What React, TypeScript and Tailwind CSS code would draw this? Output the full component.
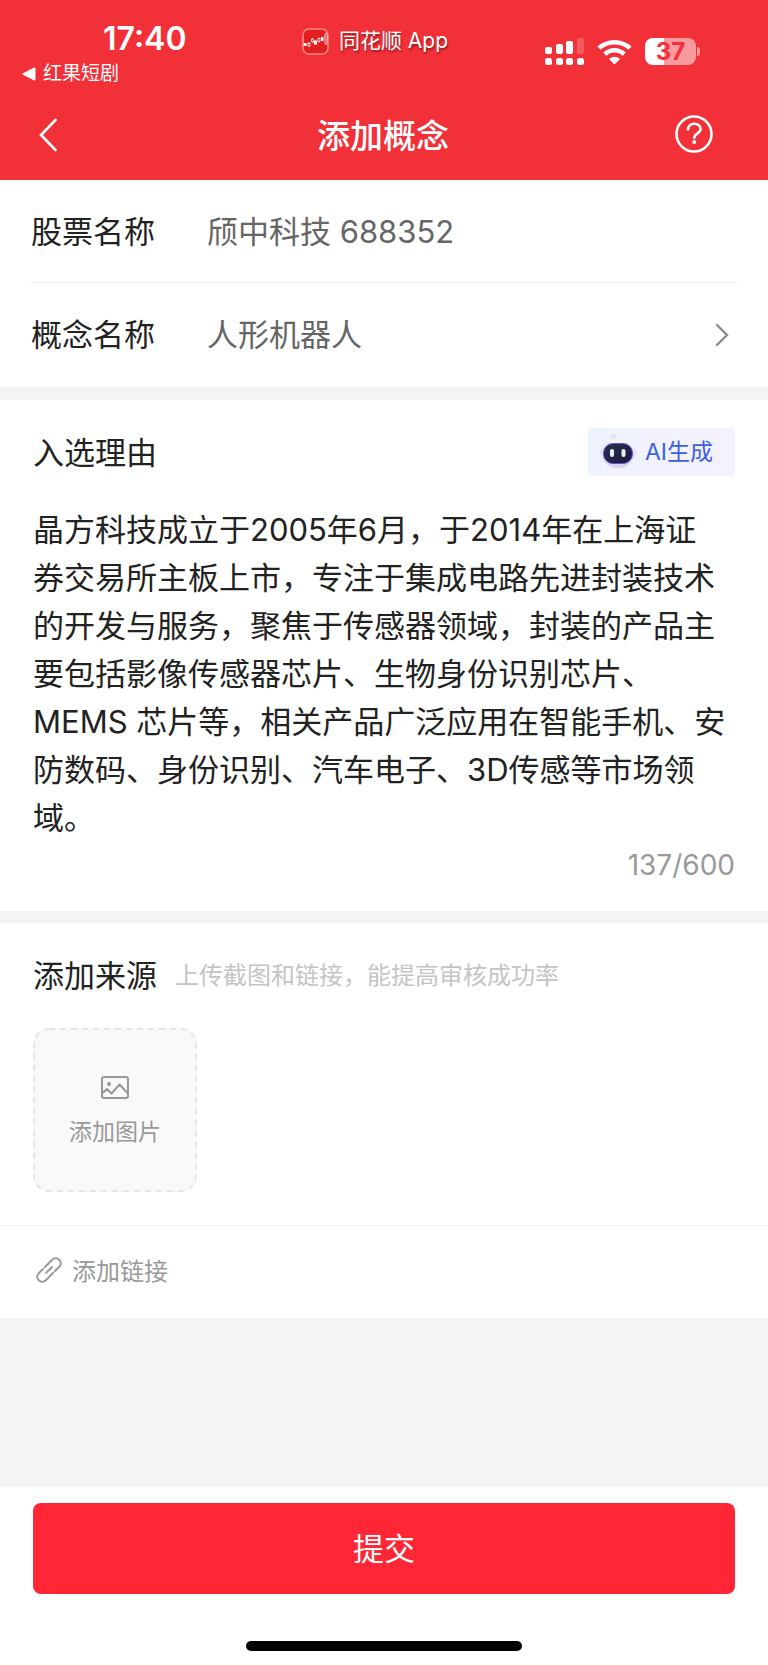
import { useState } from "react"

const MAX_LENGTH = 600

const DEFAULT_REASON =
    "晶方科技成立于2005年6月，于2014年在上海证券交易所主板上市，专注于集成电路先进封装技术的开发与服务，聚焦于传感器领域，封装的产品主要包括影像传感器芯片、生物身份识别芯片、MEMS 芯片等，相关产品广泛应用在智能手机、安防数码、身份识别、汽车电子、3D传感等市场领域。"

export default function App() {
    const [reason, setReason] = useState(DEFAULT_REASON)

    return (
        <div className="flex min-h-screen flex-col bg-[#f4f4f4] font-['Inter','Noto_Sans_CJK_SC',sans-serif] text-[#222222]">
            <header className="bg-[#f23038] text-white">
                <StatusBar />
                <NavBar />
            </header>

            <main>
                <section className="bg-white px-[31px] text-[31px] leading-[40px]">
                    <div className="flex h-[103px] items-center border-b border-[#eeeeee] pt-[2px]">
                        <label htmlFor="stock" className="w-[176px] shrink-0">股票名称</label>
                        <input id="stock" readOnly defaultValue="颀中科技 688352" className="h-[40px] min-w-0 flex-1 text-[#666666] outline-none" />
                    </div>
                    <button type="button" className="flex h-[104px] w-full items-center pr-2 text-left">
                        <span className="w-[176px] shrink-0">概念名称</span>
                        <span className="flex-1 text-[#666666]">人形机器人</span>
                        <svg width="14" height="24" viewBox="0 0 14 24" fill="none" stroke="#8c8c8c" strokeWidth="2.4" strokeLinecap="round">
                            <path d="M2 2l10 10L2 22" />
                        </svg>
                    </button>
                </section>

                <section className="mt-[13px] bg-white px-[33px] pt-7 pb-[26px]">
                    <div className="flex h-12 items-center justify-between">
                        <label htmlFor="reason" className="pt-[2px] text-[31px] leading-[40px]">入选理由</label>
                        <button type="button" className="flex h-12 items-center gap-[7px] rounded bg-linear-to-r from-[#eef3ff] to-[#f5f0fd] pr-[22px] pl-[10px] text-[23px] text-[#3b5fdc]">
                            <RobotIcon />
                            AI生成
                        </button>
                    </div>
                    <textarea
                        id="reason"
                        rows={7}
                        maxLength={MAX_LENGTH}
                        value={reason}
                        onChange={(e) => { setReason(e.target.value) }}
                        className="mt-[30px] block w-full resize-none overflow-hidden pr-2 text-[31px] leading-[48px] outline-none"
                    />
                    <p className="mt-[3px] text-right text-[28px] leading-[40px] text-[#999999]">{reason.length}/{MAX_LENGTH}</p>
                </section>

                <section className="mt-3 bg-white">
                    <div className="px-[33px] pt-[33px] pb-[33px]">
                        <div className="flex items-center gap-[18px]">
                            <h2 className="text-[31px] leading-[40px]">添加来源</h2>
                            <p className="text-[24px] leading-[40px] text-[#c4c4c4]">上传截图和链接，能提高审核成功率</p>
                        </div>
                        <button type="button" className="relative mt-8 flex size-[164px] flex-col items-center justify-center gap-[14px] rounded-2xl bg-[#f9f9f9] pt-[6px] text-[23px] leading-[36px] text-[#999999]">
                            <svg className="absolute inset-0" width="164" height="164" fill="none" stroke="#e6e6e6" strokeWidth="2">
                                <rect x="1" y="1" width="162" height="162" rx="15" strokeDasharray="6 5" />
                            </svg>
                            <svg width="28" height="24" viewBox="0 0 28 24" fill="none" stroke="#999999" strokeWidth="2" strokeLinejoin="round">
                                <rect x="1" y="1" width="26" height="21" rx="2" />
                                <circle cx="8" cy="8" r="2" fill="#999999" stroke="none" />
                                <path d="M1.500 17l4.500-4 4.500 4.500 8-9 8 8.500" />
                            </svg>
                            添加图片
                        </button>
                    </div>
                    <button type="button" className="flex h-[93px] w-full items-center gap-[10px] border-t border-[#eeeeee] px-9 text-[24px] leading-[36px] text-[#999999]">
                        <svg className="mb-1" width="26" height="26" viewBox="-13 -13 26 26" fill="none" stroke="#999999" strokeWidth="2" strokeLinecap="round">
                            <g transform="rotate(-45)">
                                <path d="M-3.500 -5H-9.500A5 5 0 0 0 -9.500 5H1" />
                                <path d="M3.500 5H9.500A5 5 0 0 0 9.500 -5H-1" />
                                <path d="M-4 0H4" />
                            </g>
                        </svg>
                        添加链接
                    </button>
                </section>
            </main>

            <footer className="mt-auto flex flex-col items-center bg-white px-[33px] pt-4 pb-[14px]">
                <button type="button" className="h-[91px] w-full rounded-lg bg-[#ff2636] text-[31px] leading-[40px] text-white">提交</button>
                <div className="mt-[47px] h-[10px] w-[276px] rounded-full bg-black" />
            </footer>
        </div>
    )
}

const StatusBar = () => (
    <div className="flex h-[90px] items-start pr-[18px]">
        <div className="flex-1 pt-[21px] pr-7 pl-[22px]">
            <p className="pl-[81px] text-[32px] leading-[36px] font-semibold">17:40</p>
            <a href="#" className="mt-1 flex items-center gap-[7px] text-[19px] leading-[26px]">
                <svg width="14" height="14" viewBox="0 0 14 14" fill="currentColor">
                    <path d="M1 6.200L12 .6q1.500-.6 1.500 1v10.800q0 1.600-1.500 1L1 7.800q-1.200-.8 0-1.600z" />
                </svg>
                红果短剧
            </a>
        </div>
        <div className="flex items-center gap-[10px] pt-[27px] text-[21px] leading-[28px] text-shadow-[1px_2px_2px_rgb(0_0_0/0.4)]">
            <svg width="27" height="27" viewBox="0 0 27 27" fill="none">
                <rect x="1" y="1" width="25" height="25" rx="6" fill="#e51f20" stroke="#f88" strokeWidth="1.500" />
                <path d="M3 16.500h2M7 14v5M10.500 10v5M17 9.500v5" stroke="#fff" strokeWidth=".8" />
                <path d="M1.500 15h3v3h-3zM12 12.500h3v4h-3zM19 9h2.500v4H19z" fill="#fff" />
                <path d="M6 15.200h2v3H6zM9.500 11h2v3h-2zM16 10.500h2v3h-2zM23 6.500q0-1.500 1-1.500t1 1.500v9q0 .8-1 .8t-1-.8z" fill="#e51f20" stroke="#fff" strokeWidth=".8" />
            </svg>
            <span>同花顺 App</span>
        </div>
        <div className="flex flex-1 items-center justify-end gap-[13px] pt-[38px] pr-[50px]">
            <svg width="39" height="27" viewBox="0 0 39 27" fill="#fff">
                <rect x="0" y="9" width="7" height="7" rx="2" />
                <rect x="11" y="6" width="7" height="10" rx="2" />
                <rect x="21" y="3" width="7" height="13" rx="2" />
                <rect x="32" y="0" width="7" height="16" rx="2" opacity=".2" />
                <rect x="0" y="20" width="7" height="7" rx="2.500" />
                <rect x="11" y="20" width="7" height="7" rx="2.500" />
                <rect x="21" y="20" width="7" height="7" rx="2.500" />
                <rect x="32" y="20" width="7" height="7" rx="2.500" />
            </svg>
            <svg width="35" height="26" viewBox="0 0 35 26" fill="none" stroke="#fff" strokeWidth="4.600">
                <path d="M2 9.200C10.500 1.200 24.500 1.200 33 9.200" />
                <path d="M7.800 15.200C13.500 10 21.500 10 27.200 15.200" />
                <path d="M17.500 25.500l-5.500-5.500q5.500-4.600 11 0z" fill="#fff" stroke="none" />
            </svg>
            <div className="flex items-center gap-px">
                <span className="flex h-[27px] w-[51px] items-center justify-center rounded-lg bg-linear-to-r from-white from-37% to-[#f99a9e] to-37% text-[24px] leading-[27px] font-bold text-[#f23038]">37</span>
                <span className="h-[9px] w-[3px] rounded-r-full bg-[#f99a9e]" />
            </div>
        </div>
    </div>
)

const NavBar = () => (
    <nav className="grid h-[90px] grid-cols-[1fr_auto_1fr] items-center pr-[55px] pl-[39px]">
        <button type="button" aria-label="返回" className="w-fit">
            <svg width="18" height="34" viewBox="0 0 18 34" fill="none" stroke="currentColor" strokeWidth="2.600" strokeLinecap="round">
                <path d="M16.500 2L2 17l14.500 15" />
            </svg>
        </button>
        <h1 className="pt-[2px] pl-[14px] text-[33px] leading-[40px] font-medium">添加概念</h1>
        <button type="button" aria-label="帮助" className="w-fit justify-self-end pb-[2px]">
            <svg width="38" height="38" viewBox="0 0 38 38" fill="none" stroke="currentColor" strokeWidth="2.600" strokeLinecap="round">
                <circle cx="19" cy="19" r="17.500" />
                <path d="M13 14.500c0-7.500 12.500-7.500 12.500-.5 0 4.500-6.300 4.600-6.300 9" />
                <circle cx="19.200" cy="27" r="2" fill="currentColor" stroke="none" />
            </svg>
        </button>
    </nav>
)

const RobotIcon = () => (
    <svg width="40" height="40" viewBox="0 0 40 40">
        <defs>
            <linearGradient id="shell" x1="0" y1="0" x2="0" y2="1">
                <stop offset="0" stopColor="#f5f4fd" />
                <stop offset="1" stopColor="#d3d0ee" />
            </linearGradient>
            <linearGradient id="visor" x1="0" y1="0" x2="1" y2="1">
                <stop offset="0" stopColor="#2b2f52" />
                <stop offset="1" stopColor="#151a3c" />
            </linearGradient>
        </defs>
        <circle cx="15.500" cy="5" r="3" fill="#e6e4f3" />
        <ellipse cx="20" cy="21" rx="18.500" ry="8" fill="#e2e0f5" />
        <ellipse cx="20" cy="21.500" rx="16.500" ry="14.500" fill="url(#shell)" />
        <rect x="5.500" y="11.500" width="29" height="20" rx="9.500" fill="url(#visor)" stroke="#6d4fd0" strokeWidth="1" />
        <rect x="12" y="17" width="4" height="8" rx="2" fill="#eeeefa" />
        <rect x="23.500" y="17" width="4" height="8" rx="2" fill="#eeeefa" />
    </svg>
)
